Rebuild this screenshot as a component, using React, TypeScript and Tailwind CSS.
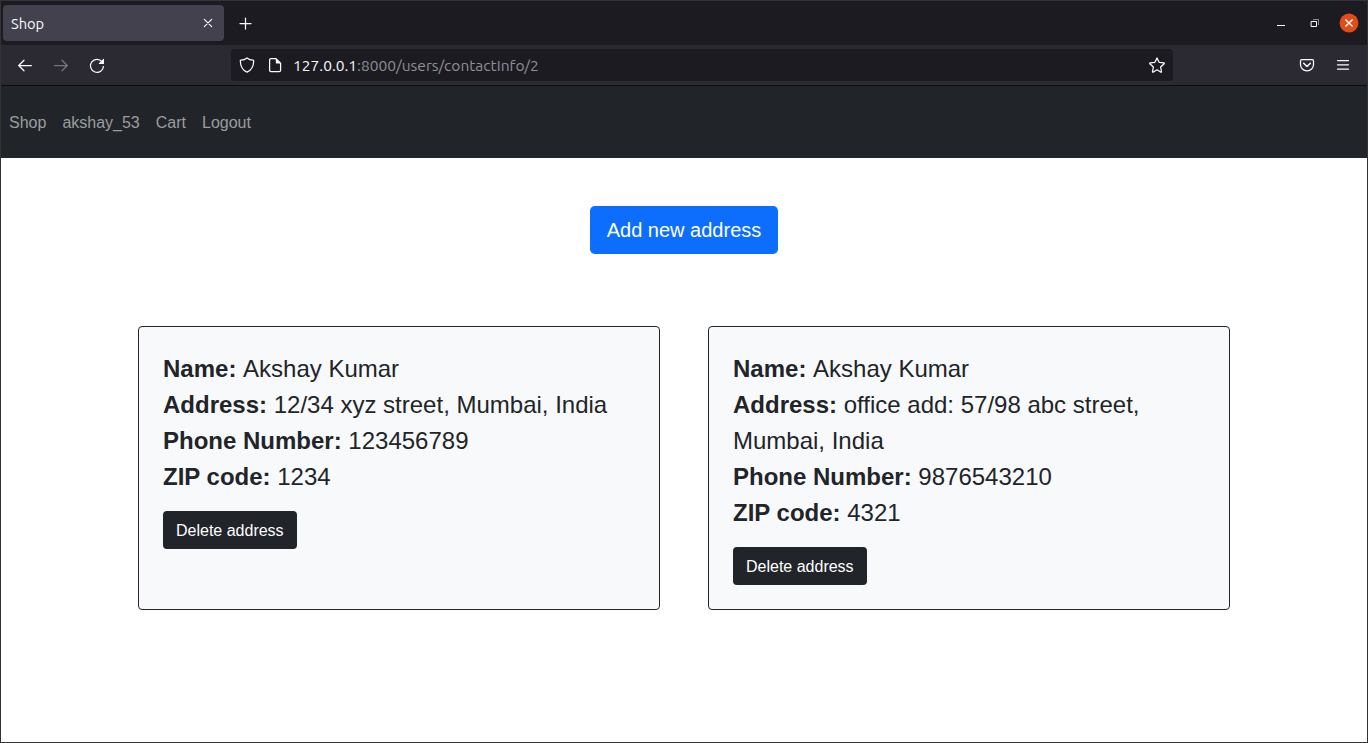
import type { ReactNode } from "react";

type Address = { name: string; address: string; phone: string; zip: string };

const addresses: Address[] = [
  { name: "Akshay Kumar", address: "12/34 xyz street, Mumbai, India", phone: "123456789", zip: "1234" },
  { name: "Akshay Kumar", address: "office add: 57/98 abc street, Mumbai, India", phone: "9876543210", zip: "4321" },
];

const links = ["Shop", "akshay_53", "Cart", "Logout"];

function Icon({ children, className = "" }: { children: ReactNode; className?: string }) {
  return (
    <svg
      viewBox="0 0 16 16"
      className={`size-4 shrink-0 ${className}`}
      fill="none"
      stroke="currentColor"
      strokeWidth="1.25"
      strokeLinecap="round"
      strokeLinejoin="round"
    >
      {children}
    </svg>
  );
}

function TabStrip() {
  return (
    <div className="flex h-11 shrink-0 items-start bg-[#1c1b22] pl-0.5 text-[#fbfbfe]">
      <div className="mt-1 flex h-9 w-[221px] items-center justify-between rounded-sm bg-[#42414d] pr-2 pl-2">
        <span className="pt-0.5 text-[14.67px] leading-5">Shop</span>
        <Icon>
          <path d="M4.300 4.300l7.400 7.400M11.700 4.300l-7.400 7.400" strokeWidth="1.150" />
        </Icon>
      </div>
      <Icon className="mt-3.5 ml-3.5">
        <path d="M7.5 3v11M2 8.5h11" />
      </Icon>
      <div className="mt-3 ml-auto flex items-center gap-4 pr-2">
        <Icon className="mr-0.5">
          <path d="M4 10.500h8" strokeWidth="1" strokeLinecap="butt" />
        </Icon>
        <Icon>
          <path d="M4.500 6.500h5v5h-5z" strokeWidth="1" strokeLinejoin="miter" />
          <path d="M6 4.500h5.500v5.500" strokeWidth="1" strokeLinecap="butt" strokeLinejoin="miter" opacity=".5" />
        </Icon>
        <svg viewBox="0 0 20 20" className="size-5" fill="none">
          <circle cx="10" cy="10" r="9.400" fill="#e34b17" />
          <path d="M6.400 6.400l7.200 7.200M13.600 6.400l-7.200 7.200" stroke="#fff" strokeWidth="1.400" />
        </svg>
      </div>
    </div>
  );
}

function Toolbar() {
  return (
    <div className="flex h-[41px] shrink-0 items-center border-b border-[#0c0c0d] bg-[#2b2a33] pl-4 text-[#fbfbfe]">
      <div className="flex w-[214px] gap-5">
        <Icon>
          <path d="M14.400 8.500H1.800M7 3.200L1.700 8.500 7 13.800" />
        </Icon>
        <Icon className="text-[#77767d]">
          <path d="M1.600 8.500h12.600M9 3.200l5.300 5.300L9 13.800" />
        </Icon>
        <Icon>
          <path d="M13.100 4.800A6.500 6.500 0 1 0 14.500 9" strokeLinecap="butt" />
          <path d="M15 2.300v4.200a.5.500 0 0 1-.5.500h-4.200c-.5 0-.7-.5-.4-.8l4.300-4.300c.3-.3.800-.1.800.4z" fill="currentColor" stroke="none" />
        </Icon>
      </div>
      <div className="flex h-8 w-[942px] items-center rounded-sm bg-[#1c1b22] px-2">
        <Icon>
          <path d="M8 .9C6.400 2.200 4 3 1.800 3.200c-.3 0-.5.300-.5.600.1 5 1.700 9.300 6.700 11.400 5-2.100 6.600-6.400 6.700-11.400 0-.3-.2-.6-.5-.6C12 3 9.600 2.200 8 .9z" />
        </Icon>
        <Icon className="ml-3">
          <path d="M9 1.700H4c-.9 0-1.400.5-1.400 1.400v10.100c0 .9.500 1.400 1.400 1.400h8.200c.9 0 1.400-.5 1.400-1.400V6.200z" />
          <path d="M8.800 1.500v4.200c0 .5.300.8.800.8h4.200z" fill="currentColor" stroke="none" />
        </Icon>
        <span className="ml-[10px] pt-0.5 text-[15.55px] leading-5 text-[#8f8f98]">
          <span className="text-[#fbfbfe]">127.0.0.1</span>:8000/users/contactInfo/2
        </span>
        <Icon className="ml-auto">
          <path d="M8 .9l2.100 4.400 4.800.6c.4.100.5.500.3.800l-3.600 3.300.9 4.700c.1.400-.3.600-.6.500L8 12.800l-3.900 2.400c-.3.100-.7-.1-.6-.5l.9-4.700L.8 6.700c-.2-.3-.1-.7.300-.8l4.800-.6z" />
        </Icon>
      </div>
      <div className="mr-4 ml-auto flex gap-5">
        <Icon>
          <path d="M2.800 2.700h10.400c.8 0 1.300.5 1.300 1.300v3.400a6.500 6.500 0 0 1-13 0V4c0-.8.500-1.300 1.300-1.300z" />
          <path d="M4.700 6.300L8 9.500l3.300-3.200" strokeWidth="1.500" />
        </Icon>
        <Icon>
          <path d="M2.500 3.500h11M2.500 7.800h11M2.500 12.200h11" />
        </Icon>
      </div>
    </div>
  );
}

function Field({ label, value }: { label: string; value: string }) {
  return (
    <p>
      <b>{label}: </b>
      {value}
    </p>
  );
}

function AddressCard({ item }: { item: Address }) {
  return (
    <article className="rounded-[4px] border border-[#212529] bg-[#f8f9fa] p-6 text-2xl leading-9 text-[#212529]">
      <Field label="Name" value={item.name} />
      <Field label="Address" value={item.address} />
      <Field label="Phone Number" value={item.phone} />
      <Field label="ZIP code" value={item.zip} />
      <button className="mt-4 block h-[38px] rounded-[4px] bg-[#212529] px-[13px] pt-0.5 text-base leading-6 text-white">
        Delete address
      </button>
    </article>
  );
}

export default function App() {
  return (
    <div className="flex h-[743px] w-[1368px] flex-col overflow-hidden border border-[#333333] bg-white font-['Liberation_Sans',Arial,sans-serif]">
      <header className="font-['Ubuntu','Noto_Sans',sans-serif]">
        <TabStrip />
        <Toolbar />
      </header>
      <nav className="flex h-[72px] shrink-0 items-center gap-4 bg-[#212529] px-2 pt-0.5 text-base text-[#9b9d9f]">
        {links.map((link) => (
          <a key={link} href="#">{link}</a>
        ))}
      </nav>
      <main className="flex flex-col items-center pt-12">
        <button className="h-12 rounded-[4.800px] bg-[#0d6efd] px-[17px] text-xl leading-[30px] text-white">
          Add new address
        </button>
        <section className="mt-[72px] grid w-[1092px] grid-cols-2 gap-12">
          {addresses.map((item) => (
            <AddressCard key={item.zip} item={item} />
          ))}
        </section>
      </main>
    </div>
  );
}
